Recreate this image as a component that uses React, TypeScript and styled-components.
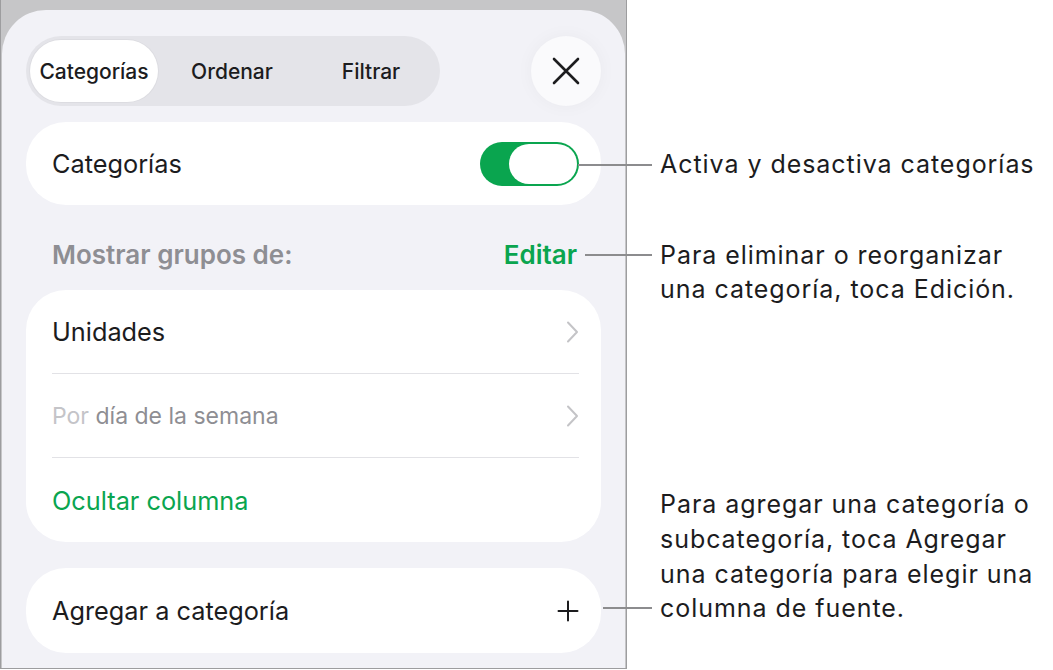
import React from "react";
import styled, { createGlobalStyle } from "styled-components";

const GlobalStyle = createGlobalStyle`
  html, body {
    margin: 0;
    padding: 0;
    background: #ffffff;
  }
  body {
    font-family: Inter, "Noto Sans", "Liberation Sans", sans-serif;
    -webkit-font-smoothing: antialiased;
  }
`;

const GREEN = "#0aa54f";

const Page = styled.div`
  display: flex;
  width: 1053px;
  height: 670px;
  overflow: hidden;
`;

const Frame = styled.div`
  box-sizing: border-box;
  width: 627px;
  height: 669px;
  flex-shrink: 0;
  background: #c6c6c8;
  border: 1px solid #9d9d9f;
  border-top: none;
  padding: 10px 1px 0 1px;
  display: flex;
`;

const Sheet = styled.div`
  flex: 1;
  background: #f2f2f7;
  border-radius: 44px 44px 0 0;
  padding: 26px 24px 0 24px;
  display: flex;
  flex-direction: column;
`;

const TopBar = styled.div`
  display: flex;
  align-items: center;
  justify-content: space-between;
  height: 70px;
  margin-bottom: 16px;
`;

const Segmented = styled.div`
  box-sizing: border-box;
  width: 414px;
  height: 70px;
  padding: 4px;
  border-radius: 35px;
  background: #e4e4e9;
  display: grid;
  grid-template-columns: 128px 148px 1fr;
`;

const Segment = styled.div<{ $active?: boolean }>`
  display: flex;
  align-items: center;
  justify-content: center;
  border-radius: 31px;
  font-size: 21px;
  font-weight: 500;
  color: #1c1c1e;
  background: ${(p) => (p.$active ? "#ffffff" : "transparent")};
  box-shadow: ${(p) => (p.$active ? "0 0 0 1px rgba(0,0,0,0.03)" : "none")};
`;

const CloseButton = styled.div`
  width: 70px;
  height: 70px;
  border-radius: 50%;
  background: #fafafc;
  display: flex;
  align-items: center;
  justify-content: center;
  box-shadow: 0 0 18px rgba(0, 0, 0, 0.04);
`;

const Card = styled.div`
  background: #ffffff;
  border-radius: 40px;
  overflow: hidden;
`;

const Row = styled.div<{ $height: number }>`
  height: ${(p) => p.$height}px;
  display: flex;
  align-items: center;
  justify-content: space-between;
  padding: 0 22px 0 26px;
  font-size: 25.3px;
  color: #1c1c1e;
`;

const ListRow = styled.div<{ $divider?: boolean; $small?: boolean }>`
  height: 84px;
  margin: 0 22px 0 26px;
  display: flex;
  align-items: center;
  justify-content: space-between;
  font-size: ${(p) => (p.$small ? "23px" : "25.3px")};
  border-bottom: ${(p) => (p.$divider ? "1.5px solid #e2e2e6" : "none")};
  box-sizing: border-box;
`;

const Label = styled.span<{ $tone?: "dark" | "gray" | "faint" | "green" }>`
  color: ${(p) =>
    p.$tone === "gray"
      ? "#8e8e93"
      : p.$tone === "faint"
      ? "#c4c4c8"
      : p.$tone === "green"
      ? GREEN
      : "#1c1c1e"};
`;

const Toggle = styled.div`
  box-sizing: border-box;
  width: 99px;
  height: 44px;
  border-radius: 22px;
  background: ${GREEN};
  padding: 2px 2px 2px 29px;
  display: flex;
`;

const Knob = styled.div`
  flex: 1;
  border-radius: 20px;
  background: #ffffff;
`;

const SectionHeader = styled.div`
  height: 85px;
  display: flex;
  align-items: flex-end;
  justify-content: space-between;
  padding: 0 24px 19px 26px;
  box-sizing: border-box;
  font-size: 26px;
  font-weight: 600;
  line-height: 32px;
`;

const Spacer = styled.div<{ $h: number }>`
  height: ${(p) => p.$h}px;
  flex-shrink: 0;
`;

const Notes = styled.div`
  flex: 1;
  display: flex;
  flex-direction: column;
  padding-top: 147px;
`;

const Callout = styled.div<{ $align: "start" | "end"; $top: number }>`
  display: flex;
  align-items: ${(p) => (p.$align === "start" ? "flex-start" : "flex-end")};
  margin-top: ${(p) => p.$top}px;
  font-size: 25px;
  letter-spacing: 0.95px;
  line-height: 34.7px;
  color: #1c1c1e;
  white-space: nowrap;
`;

const Leader = styled.div<{ $from: number; $align: "start" | "end" }>`
  flex-shrink: 0;
  width: ${(p) => 652 - p.$from}px;
  margin-left: ${(p) => p.$from - 627}px;
  margin-right: 8px;
  height: 2px;
  background: #8c8c8e;
  ${(p) => (p.$align === "start" ? "margin-top: 16.5px;" : "margin-bottom: 16.5px;")}
`;

const NoteText = styled.div``;

const Chevron = () => (
  <svg width="14" height="22" viewBox="0 0 14 22" fill="none">
    <path d="M3 1.5 L12 11 L3 20.5" stroke="#c4c4c7" strokeWidth="2" strokeLinecap="round" strokeLinejoin="round" />
  </svg>
);

const Plus = () => (
  <svg width="22" height="22" viewBox="0 0 22 22" fill="none">
    <path d="M11 1.5 V20.5 M1.5 11 H20.5" stroke="#1c1c1e" strokeWidth="2" strokeLinecap="round" />
  </svg>
);

const CloseIcon = () => (
  <svg width="28" height="28" viewBox="0 0 28 28" fill="none">
    <path d="M2 2 L26 26 M26 2 L2 26" stroke="#1c1c1e" strokeWidth="2.6" strokeLinecap="round" />
  </svg>
);

export default function App() {
  return (
    <>
      <GlobalStyle />
      <Page>
        <Frame>
          <Sheet>
            <TopBar>
              <Segmented>
                <Segment $active>Categorías</Segment>
                <Segment>Ordenar</Segment>
                <Segment>Filtrar</Segment>
              </Segmented>
              <CloseButton>
                <CloseIcon />
              </CloseButton>
            </TopBar>

            <Card>
              <Row $height={83}>
                <Label>Categorías</Label>
                <Toggle>
                  <Knob />
                </Toggle>
              </Row>
            </Card>

            <SectionHeader>
              <Label $tone="gray">Mostrar grupos de:</Label>
              <Label $tone="green">Editar</Label>
            </SectionHeader>

            <Card>
              <ListRow $divider>
                <Label>Unidades</Label>
                <Chevron />
              </ListRow>
              <ListRow $divider $small>
                <span>
                  <Label $tone="faint">Por </Label>
                  <Label $tone="gray">día de la semana</Label>
                </span>
                <Chevron />
              </ListRow>
              <ListRow>
                <Label $tone="green">Ocultar columna</Label>
              </ListRow>
            </Card>

            <Spacer $h={26} />

            <Card>
              <Row $height={85}>
                <Label>Agregar a categoría</Label>
                <Plus />
              </Row>
            </Card>
          </Sheet>
        </Frame>

        <Notes>
          <Callout $align="start" $top={0}>
            <Leader $from={578} $align="start" />
            <NoteText>Activa y desactiva categorías</NoteText>
          </Callout>
          <Callout $align="start" $top={56}>
            <Leader $from={585} $align="start" />
            <NoteText>
              Para eliminar o reorganizar
              <br />
              una categoría, toca Edición.
            </NoteText>
          </Callout>
          <Callout $align="end" $top={180}>
            <Leader $from={603} $align="end" />
            <NoteText>
              Para agregar una categoría o
              <br />
              subcategoría, toca Agregar
              <br />
              una categoría para elegir una
              <br />
              columna de fuente.
            </NoteText>
          </Callout>
        </Notes>
      </Page>
    </>
  );
}
